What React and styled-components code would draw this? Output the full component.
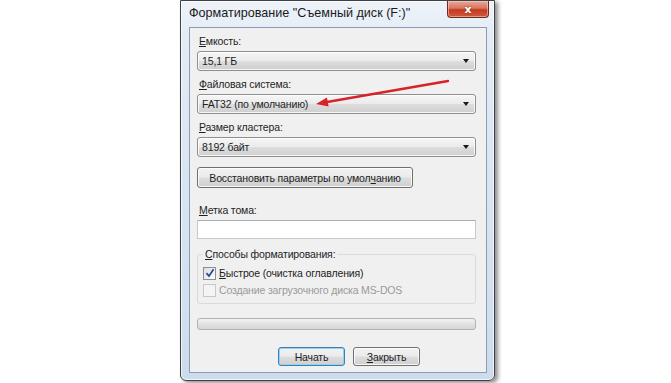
import React from 'react'
import styled, { createGlobalStyle } from 'styled-components'

const GlobalStyle = createGlobalStyle`
  html, body {
    margin: 0;
    padding: 0;
    background: #ffffff;
  }
  body {
    font-family: "Liberation Sans", Arial, sans-serif;
    font-size: 10.5px;
    letter-spacing: -0.15px;
    color: #1e1e1e;
  }
`

const Stage = styled.div`
  width: 671px;
  height: 383px;
  box-sizing: border-box;
  padding-left: 180px;
  display: flex;
  align-items: flex-start;
`

const Window = styled.div`
  position: relative;
  width: 315px;
  height: 381px;
  box-sizing: border-box;
  border: 1px solid #3c4148;
  border-radius: 0 0 6px 6px;
  background: linear-gradient(180deg, #eef3f9 0%, #e3ebf5 10%, #d6e3f1 60%, #cddcec 100%);
  box-shadow: 3px 2px 4px rgba(0, 0, 0, 0.45), inset 0 0 0 1px rgba(255, 255, 255, 0.7);
  display: flex;
  flex-direction: column;
  padding: 0 7px 7px 8px;
`

const TitleBar = styled.div`
  height: 26px;
  display: flex;
  align-items: flex-start;
  justify-content: space-between;
`

const Title = styled.div`
  font-size: 12.6px;
  letter-spacing: 0;
  color: #1a1a1a;
  padding-top: 5px;
`

const CloseButton = styled.div`
  width: 42px;
  height: 17px;
  margin-right: -2px;
  box-sizing: border-box;
  border: 1px solid #6a2a20;
  border-top: none;
  border-radius: 0 0 4px 4px;
  background: linear-gradient(180deg, #e8a898 0%, #d97560 45%, #c23a22 55%, #cf5a3e 100%);
  box-shadow: inset 0 0 0 1px rgba(255, 220, 210, 0.5);
  display: flex;
  align-items: center;
  justify-content: center;
  color: #ffffff;
  font-family: "DejaVu Sans", sans-serif;
  font-weight: bold;
  font-size: 11px;
  text-shadow: 0 0 2px #7a2010;
`

const Panel = styled.div`
  flex: 1;
  box-sizing: border-box;
  background: #f0f0f0;
  border: 1px solid #8b9db5;
  padding: 6px 10px 0 7px;
  display: flex;
  flex-direction: column;
`

const Label = styled.div`
  height: 14px;
  line-height: 14px;
  margin: ${p => p.$top || 0}px 0 3px 2px;
  color: #1e1e1e;
`

const Key = styled.span`
  text-decoration: underline;
`

const Select = styled.div`
  height: 20px;
  box-sizing: border-box;
  border: 1px solid #8e8f8f;
  border-radius: 3px;
  background: linear-gradient(180deg, #f6f6f6 0%, #ebebeb 48%, #dddddd 52%, #cfcfcf 100%);
  box-shadow: inset 0 0 0 1px rgba(255, 255, 255, 0.8);
  display: flex;
  align-items: center;
  justify-content: space-between;
  padding: 0 6px 0 4px;
  margin-bottom: 6px;
`

const Caret = styled.span`
  width: 0;
  height: 0;
  border-left: 3.5px solid transparent;
  border-right: 3.5px solid transparent;
  border-top: 4px solid #1a1a1a;
`

const Button = styled.div`
  width: ${p => p.$w}px;
  height: ${p => p.$h || 21}px;
  box-sizing: border-box;
  border: 1px solid ${p => (p.$default ? '#3c7fb1' : '#707070')};
  border-radius: 3px;
  background: linear-gradient(180deg, #f2f2f2 0%, #ebebeb 48%, #dddddd 52%, #cfcfcf 100%);
  box-shadow: inset 0 0 0 1px ${p => (p.$default ? '#8fd3f5' : 'rgba(255, 255, 255, 0.8)')};
  display: flex;
  align-items: center;
  justify-content: center;
  color: #1e1e1e;
`

const Input = styled.div`
  height: 19px;
  box-sizing: border-box;
  border: 1px solid #c5c9cf;
  border-top-color: #abadb3;
  background: #ffffff;
`

const Group = styled.fieldset`
  margin: 8px 0 0 0;
  padding: 5px 5px 6px 5px;
  border: 1px solid #d7dbe0;
  border-radius: 3px;
  display: flex;
  flex-direction: column;
  gap: 3px;
  legend {
    padding: 0 2px;
    line-height: 14px;
  }
`

const CheckRow = styled.div`
  height: 14px;
  display: flex;
  align-items: center;
  gap: 3px;
  color: ${p => (p.$disabled ? '#9a9a9a' : '#1e1e1e')};
`

const Box = styled.span`
  width: 13px;
  height: 13px;
  box-sizing: border-box;
  border: 1px solid ${p => (p.$disabled ? '#c8c8c8' : '#8f8f8f')};
  background: ${p => (p.$disabled ? '#f4f4f4' : 'linear-gradient(135deg, #dcdcdc, #ffffff)')};
  display: flex;
  align-items: center;
  justify-content: center;
`

const Progress = styled.div`
  margin-top: 14px;
  height: 12px;
  box-sizing: border-box;
  border: 1px solid #b2b2b2;
  border-radius: 3px;
  background: linear-gradient(180deg, #f3f3f3 0%, #e2e2e2 50%, #d6d6d6 100%);
`

const Actions = styled.div`
  margin-top: 17px;
  display: flex;
  gap: 8px;
  padding-left: 81px;
`

const Arrow = styled.svg`
  position: absolute;
  left: 0;
  top: 0;
  pointer-events: none;
`

const Check = () => (
  <svg width="10" height="10" viewBox="0 0 10 10">
    <path d="M1.5 5.2 L4 8 L8.6 1.2" fill="none" stroke="#2a4f9a" strokeWidth="1.8" />
  </svg>
)

export default function App() {
  return (
    <>
      <GlobalStyle />
      <Stage>
        <Window>
          <TitleBar>
            <Title>Форматирование "Съемный диск (F:)"</Title>
            <CloseButton>x</CloseButton>
          </TitleBar>
          <Panel>
            <Label><Key>Е</Key>мкость:</Label>
            <Select>15,1 ГБ<Caret /></Select>
            <Label><Key>Ф</Key>айловая система:</Label>
            <Select>FAT32 (по умолчанию)<Caret /></Select>
            <Label><Key>Р</Key>азмер кластера:</Label>
            <Select>8192 байт<Caret /></Select>
            <Button $w={216} $h={21} style={{ marginTop: 4 }}>
              Восстановить параметры по умол<Key>ч</Key>анию
            </Button>
            <Label $top={15}><Key>М</Key>етка тома:</Label>
            <Input />
            <Group>
              <legend><Key>С</Key>пособы форматирования:</legend>
              <CheckRow>
                <Box><Check /></Box>
                <span><Key>Б</Key>ыстрое (очистка оглавления)</span>
              </CheckRow>
              <CheckRow $disabled>
                <Box $disabled />
                <span>Создание загрузочного диска MS-DOS</span>
              </CheckRow>
            </Group>
            <Progress />
            <Actions>
              <Button $w={67} $h={19} $default>Начать</Button>
              <Button $w={67} $h={19}><Key>З</Key>акрыть</Button>
            </Actions>
          </Panel>
          <Arrow width="315" height="381">
            <line x1="267" y1="80" x2="146" y2="101" stroke="#d8222a" strokeWidth="2.4" strokeLinecap="round" />
            <polygon points="135,103 147.6,105.6 146,96.4" fill="#d8222a" />
          </Arrow>
        </Window>
      </Stage>
    </>
  )
}
